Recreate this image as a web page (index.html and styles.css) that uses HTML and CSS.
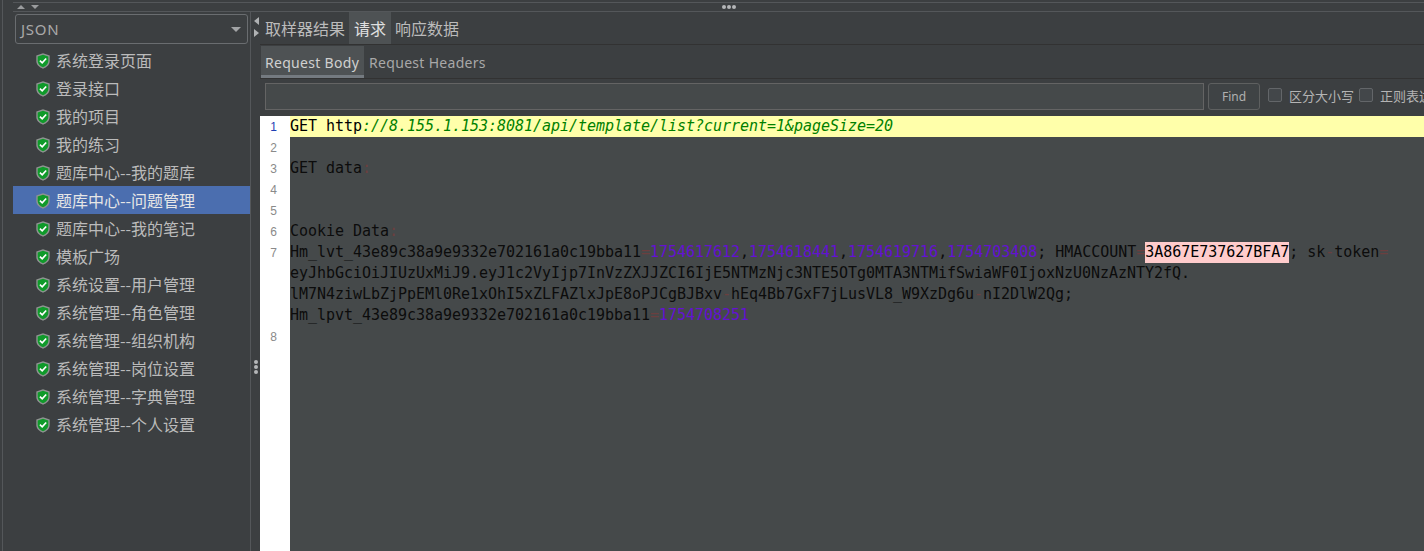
FILE: index.html
```html
<!DOCTYPE html>
<html lang="zh">
<head>
<meta charset="utf-8">
<title>JMeter</title>
<link rel="stylesheet" href="styles.css">
</head>
<body>
<svg class="defs" width="0" height="0" aria-hidden="true">
  <symbol id="shield" viewBox="0 0 14 16">
    <path d="M7 .3 13.700 2.500V8c0 3.700-2.900 6.300-6.700 7.700C3.200 14.300.3 11.700.3 8V2.500Z" fill="#8f9492"/>
    <path d="M7 1.700 12.300 3.400V8c0 2.900-2.300 5-5.300 6.200C4 13 1.700 10.900 1.700 8V3.400Z" fill="#0f9a2a"/>
    <path d="M3.900 7.700 6.200 9.800 10.200 5.500" fill="none" stroke="#fff" stroke-width="1.700"/>
  </symbol>
</svg>
<div class="app">
  <div class="topsplit">
    <div class="arrows"><i class="up"></i><i class="down"></i></div>
    <div class="dots-h"><b></b><b></b><b></b></div>
  </div>
  <div class="panes">
    <aside class="left">
      <div class="combo"><span>JSON</span><i class="down big"></i></div>
      <ul class="tree">
        <li><svg class="ic"><use href="#shield"/></svg>系统登录页面</li>
        <li><svg class="ic"><use href="#shield"/></svg>登录接口</li>
        <li><svg class="ic"><use href="#shield"/></svg>我的项目</li>
        <li><svg class="ic"><use href="#shield"/></svg>我的练习</li>
        <li><svg class="ic"><use href="#shield"/></svg>题库中心--我的题库</li>
        <li class="sel"><svg class="ic"><use href="#shield"/></svg>题库中心--问题管理</li>
        <li><svg class="ic"><use href="#shield"/></svg>题库中心--我的笔记</li>
        <li><svg class="ic"><use href="#shield"/></svg>模板广场</li>
        <li><svg class="ic"><use href="#shield"/></svg>系统设置--用户管理</li>
        <li><svg class="ic"><use href="#shield"/></svg>系统管理--角色管理</li>
        <li><svg class="ic"><use href="#shield"/></svg>系统管理--组织机构</li>
        <li><svg class="ic"><use href="#shield"/></svg>系统管理--岗位设置</li>
        <li><svg class="ic"><use href="#shield"/></svg>系统管理--字典管理</li>
        <li><svg class="ic"><use href="#shield"/></svg>系统管理--个人设置</li>
      </ul>
    </aside>
    <div class="vsplit">
      <div class="vsplit-arrows"><i class="lt"></i><i class="rt"></i></div>
      <div class="dots-v"><b></b><b></b><b></b></div>
    </div>
    <main class="right">
      <nav class="tabs">
        <span class="tab">取样器结果</span>
        <span class="tab on">请求</span>
        <span class="tab">响应数据</span>
      </nav>
      <nav class="subtabs">
        <span class="sub on">Request Body</span>
        <span class="sub">Request Headers</span>
      </nav>
      <div class="search">
        <div class="input"></div>
        <div class="btn">Find</div>
        <label class="chk"><i></i>区分大小写</label>
        <label class="chk"><i></i>正则表达式</label>
      </div>
      <div class="editor">
        <div class="ln cur"><span class="no">1</span><div class="code"><div class="row">GET http<span class="url">://8.155.1.153:8081/api/template/list?current=1&amp;pageSize=20</span></div></div></div>
        <div class="ln"><span class="no">2</span><div class="code"><div class="row"></div></div></div>
        <div class="ln"><span class="no">3</span><div class="code"><div class="row">GET data<span class="p">:</span></div></div></div>
        <div class="ln"><span class="no">4</span><div class="code"><div class="row"></div></div></div>
        <div class="ln"><span class="no">5</span><div class="code"><div class="row"></div></div></div>
        <div class="ln"><span class="no">6</span><div class="code"><div class="row">Cookie Data<span class="p">:</span></div></div></div>
        <div class="ln"><span class="no">7</span><div class="code">
          <div class="row">Hm_lvt_43e89c38a9e9332e702161a0c19bba11<span class="p">=</span><span class="n">1754617612</span>,<span class="n">1754618441</span>,<span class="n">1754619716</span>,<span class="n">1754703408</span>; HMACCOUNT<span class="p">=</span><span class="hl">3A867E737627BFA7</span>; sk<span class="p">-</span>token<span class="p">=</span></div>
          <div class="row">eyJhbGciOiJIUzUxMiJ9.eyJ1c2VyIjp7InVzZXJJZCI6IjE5NTMzNjc3NTE5OTg0MTA3NTMifSwiaWF0IjoxNzU0NzAzNTY2fQ.</div>
          <div class="row">lM7N4ziwLbZjPpEMl0Re1xOhI5xZLFAZlxJpE8oPJCgBJBxv<span class="p">-</span>hEq4Bb7GxF7jLusVL8_W9XzDg6u<span class="p">-</span>nI2DlW2Qg;</div>
          <div class="row">Hm_lpvt_43e89c38a9e9332e702161a0c19bba11<span class="p">=</span><span class="n">1754708251</span></div>
        </div></div>
        <div class="ln last"><span class="no">8</span><div class="code"><div class="row"></div></div></div>
      </div>
    </main>
  </div>
</div>
</body>
</html>
```
FILE: styles.css
```css
* { box-sizing: border-box; }
html, body { margin: 0; height: 100%; overflow: hidden; background: #3c3f41; }
.defs { display: block; height: 0; }
i { display: block; font-style: normal; }

.app {
  width: 1422px;
  height: 551px;
  margin-left: 2px;
  padding-left: 10px;
  border-left: 1px solid #54575a;
  display: flex;
  flex-direction: column;
  overflow: hidden;
  color: #bbbbbb;
  font-family: "Noto Sans CJK SC", "Noto Sans", sans-serif;
}

.topsplit {
  height: 10px;
  margin-top: 2px;
  flex: none;
  display: flex;
  align-items: center;
  justify-content: space-between;
  border-top: 1px solid #54575a;
  border-bottom: 1px solid #54575a;
  padding-left: 4px;
}
.arrows { display: flex; gap: 6px; }
.dots-h { display: flex; gap: 1px; margin-right: 688px; }
.dots-h b, .dots-v b { display: block; width: 4px; height: 4px; background: #b4b6b8; border-radius: 50%; }

.up { width: 0; height: 0; border: 4px solid transparent; border-top: 0; border-bottom: 4px solid #9a9c9e; }
.down { width: 0; height: 0; border: 4px solid transparent; border-bottom: 0; border-top: 4px solid #9a9c9e; }
.big { border-width: 5px 5px 0; border-top-color: #a2a4a6; }
.lt { width: 0; height: 0; border: 4px solid transparent; border-left: 0; border-right: 5px solid #b0b2b4; }
.rt { width: 0; height: 0; border: 4px solid transparent; border-right: 0; border-left: 5px solid #b0b2b4; }

.panes { flex: 1; display: flex; min-height: 0; }

.left {
  width: 237px;
  flex: none;
  display: flex;
  flex-direction: column;
}
.combo {
  width: 233px;
  height: 30px;
  margin: 2px 0 2px 2px;
  flex: none;
  border: 1px solid #6a6d70;
  border-radius: 3px;
  background: #3c3f41;
  display: flex;
  align-items: center;
  justify-content: space-between;
  padding: 0 6px 0 5px;
  font-size: 15px;
  letter-spacing: .7px;
  color: #a9a9a9;
  font-family: "Noto Sans", sans-serif;
}
.tree { list-style: none; margin: 0; padding: 0; flex: 1; }
.tree li {
  height: 28px;
  display: flex;
  align-items: center;
  padding-left: 23px;
  font-size: 16px;
  line-height: 28px;
  white-space: nowrap;
  color: #bbbbbb;
}
.tree li.sel { background: #4b6eaf; color: #e6e6e6; }
.ic { width: 14px; height: 16px; margin: 2px 6px 0 0; flex: none; }

.vsplit {
  width: 10px;
  flex: none;
  border-left: 1px solid #54575a;
  display: flex;
  flex-direction: column;
  align-items: center;
}
.vsplit-arrows { display: flex; flex-direction: column; gap: 4px; margin: 5px 0 0 2px; }
.dots-v { display: flex; flex-direction: column; gap: 1px; margin-top: 323px; }

.right { flex: 1; min-width: 0; display: flex; flex-direction: column; overflow: hidden; }

.tabs { height: 33px; flex: none; display: flex; padding-left: 1px; border-bottom: 1px solid #323232; }
.tab { padding: 0 4px; font-size: 16px; line-height: 32px; }
.tab.on { background: #4e5254; color: #e0e0e0; padding: 0 5px; }

.subtabs { height: 34px; flex: none; display: flex; align-items: flex-start; padding: 1px 0 0 1px; border-bottom: 1px solid #323232; }
.sub { height: 32px; padding: 0 4px; font-size: 14px; line-height: 34px; font-family: "Noto Sans", sans-serif; letter-spacing: .3px; color: #a8a8a8; }
.sub + .sub { margin-left: 1px; }
.sub.on { background: #4e5254; color: #d0d0d0; border-bottom: 3px solid #747a80; padding-right: 5px; }

.search { height: 37px; flex: none; display: flex; align-items: flex-start; padding: 4px 0 0 5px; gap: 4px; white-space: nowrap; }
.input { width: 939px; height: 27px; flex: none; background: #45494a; border: 1px solid #646464; }
.btn {
  width: 52px; height: 27px; flex: none;
  border: 1px solid #5e6060; border-radius: 3px;
  background: #3f4345;
  display: flex; align-items: center; justify-content: center;
  font-size: 12px; color: #b0b0b0;
  font-family: "Noto Sans", sans-serif;
}
.chk { height: 25px; display: flex; align-items: center; gap: 7px; font-size: 13px; color: #b4b4b4; margin-left: 4px; flex: none; }
.chk i { width: 14px; height: 14px; border: 1px solid #636669; border-radius: 2px; background: #43474a; margin-top: -2px; }
.chk + .chk { margin-left: 1px; }

.editor {
  flex: 1;
  min-height: 0;
  background: linear-gradient(to right, #ffffff 30px, #45494a 30px);
  font-family: "DejaVu Sans Mono", "Liberation Mono", monospace;
  font-size: 15px;
  letter-spacing: -.03px;
  line-height: 21px;
  color: #0c0c0c;
}
.ln { display: flex; }
.no { width: 30px; height: 21px; flex: none; padding-right: 13px; text-align: right; font-size: 12px; line-height: 22px; letter-spacing: 0; color: #8a8a8a; font-family: "Liberation Sans", sans-serif; }
.cur .no { color: #1f3fb4; }
.code { flex: 1; min-width: 0; }
.row { height: 21px; white-space: pre; }
.cur .code { background: #ffffaa; color: #000000; }
.url { color: #008000; font-style: italic; }
.p { color: #6b3f3f; }
.n { color: #6411d2; }
.hl { background: #ffcccc; color: #000000; display: inline-block; height: 21px; }
```
